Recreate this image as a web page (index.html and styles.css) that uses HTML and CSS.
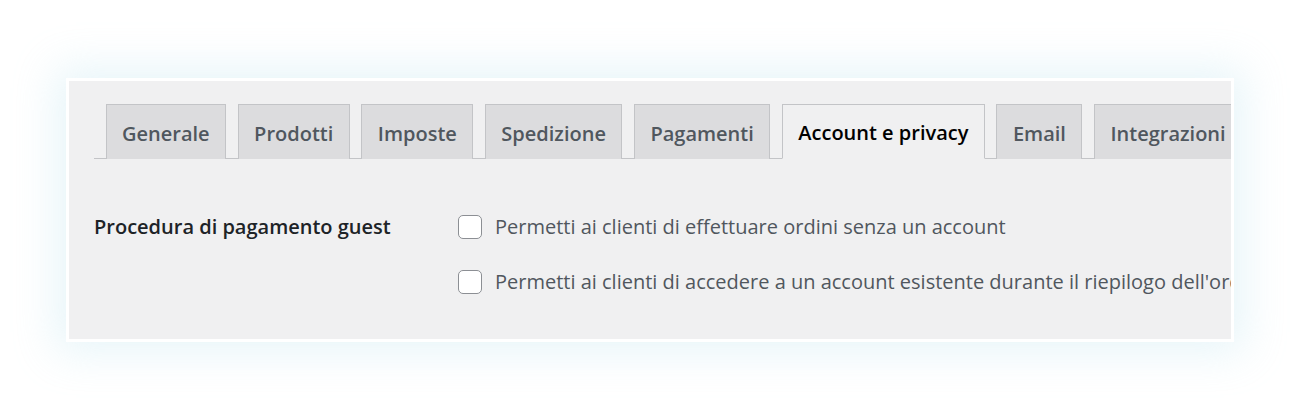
FILE: index.html
```html
<!DOCTYPE html>
<html lang="it">
<head>
<meta charset="utf-8">
<title>Impostazioni</title>
<link rel="stylesheet" href="styles.css">
</head>
<body>
<div class="stage">
  <div class="card">
    <nav class="tabs">
      <a class="tab">Generale</a>
      <a class="tab">Prodotti</a>
      <a class="tab">Imposte</a>
      <a class="tab">Spedizione</a>
      <a class="tab">Pagamenti</a>
      <a class="tab active">Account e privacy</a>
      <a class="tab">Email</a>
      <a class="tab">Integrazioni</a>
    </nav>
    <div class="row">
      <div class="label">Procedura di pagamento guest</div>
      <div class="options">
        <label class="opt"><span class="box"></span><span>Permetti ai clienti di effettuare ordini senza un account</span></label>
        <label class="opt"><span class="box"></span><span>Permetti ai clienti di accedere a un account esistente durante il riepilogo dell'ordine</span></label>
      </div>
    </div>
  </div>
</div>
</body>
</html>
```
FILE: styles.css
```css
html, body {
  margin: 0;
  padding: 0;
  background: #ffffff;
}
body {
  font-family: "Open Sans", "Noto Sans", sans-serif;
  width: 1300px;
  height: 417px;
  overflow: hidden;
}
.stage {
  padding: 78px 0 0 66px;
}
.card {
  box-sizing: content-box;
  width: 1137px;
  height: 235px;
  padding: 23px 0 0 25px;
  border: 3px solid #ffffff;
  background: #f0f0f1;
  box-shadow: 0 0 40px 10px rgba(175, 222, 235, 0.3);
  overflow: hidden;
}
.tabs {
  display: flex;
  white-space: nowrap;
  border-bottom: 1px solid #c3c4c7;
}
.tab {
  flex: none;
  margin-left: 11.5px;
  margin-bottom: -1px;
  height: 55px;
  box-sizing: border-box;
  padding: 2px 15.5px 0;
  border: 1px solid #c3c4c7;
  border-bottom: none;
  background: #dcdcde;
  color: #50575e;
  font-size: 20px;
  font-weight: 600;
  display: flex;
  align-items: center;
}
.tab.active {
  background: #f0f0f1;
  color: #000000;
  border-bottom: 1px solid #f0f0f1;
}
.row {
  display: flex;
  padding-top: 56px;
}
.label {
  width: 364px;
  flex: none;
  font-size: 20px;
  font-weight: 600;
  color: #1d2327;
  line-height: 24px;
}
.options {
  display: flex;
  flex-direction: column;
  gap: 31px;
}
.opt {
  display: flex;
  align-items: center;
  white-space: nowrap;
  gap: 13px;
  font-size: 20px;
  color: #50575e;
  line-height: 24px;
}
.box {
  width: 22px;
  height: 22px;
  border: 1px solid #8c8f94;
  border-radius: 5px;
  background: #ffffff;
  flex: none;
}
```
